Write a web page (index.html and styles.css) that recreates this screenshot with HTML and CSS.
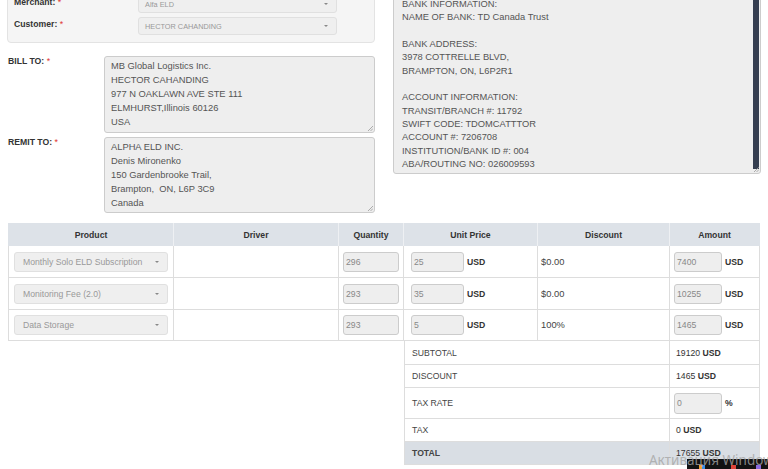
FILE: index.html
```html
<!DOCTYPE html>
<html>
<head>
<meta charset="utf-8">
<link rel="stylesheet" href="styles.css">
</head>
<body>
<div class="top">
  <div class="left">
    <div class="well">
      <div class="frow">
        <div class="lbl">Merchant: <span class="req">*</span></div>
        <div class="sel sel-top">Alfa ELD<span class="caret"></span></div>
      </div>
      <div class="frow">
        <div class="lbl">Customer: <span class="req">*</span></div>
        <div class="sel sel-top">HECTOR CAHANDING<span class="caret"></span></div>
      </div>
    </div>
    <div class="arow arow-first">
      <div class="alb">BILL TO: <span class="req">*</span></div>
      <div class="ta ta-bill">MB Global Logistics Inc.<br>HECTOR CAHANDING<br>977 N OAKLAWN AVE STE 111<br>ELMHURST,Illinois 60126<br>USA<svg class="grip" width="6" height="6" viewBox="0 0 6 6"><path d="M1 6L6 1M3.5 6L6 3.5" stroke="#999" stroke-width="0.8"/></svg></div>
    </div>
    <div class="arow">
      <div class="alb">REMIT TO: <span class="req">*</span></div>
      <div class="ta ta-remit">ALPHA ELD INC.<br>Denis Mironenko<br>150 Gardenbrooke Trail,<br>Brampton,&nbsp; ON, L6P 3C9<br>Canada<svg class="grip" width="6" height="6" viewBox="0 0 6 6"><path d="M1 6L6 1M3.5 6L6 3.5" stroke="#999" stroke-width="0.8"/></svg></div>
    </div>
  </div>
  <div class="right">
    <div class="bank">
      <div class="bank-text">BANK INFORMATION:<br>NAME OF BANK: TD Canada Trust<br><br>BANK ADDRESS:<br>3978 COTTRELLE BLVD,<br>BRAMPTON, ON, L6P2R1<br><br>ACCOUNT INFORMATION:<br>TRANSIT/BRANCH #: 11792<br>SWIFT CODE: TDOMCATTTOR<br>ACCOUNT #: 7206708<br>INSTITUTION/BANK ID #: 004<br>ABA/ROUTING NO: 026009593</div>
      <div class="sb"></div>
      <svg class="grip" width="6" height="6" viewBox="0 0 6 6"><path d="M1 6L6 1M3.5 6L6 3.5" stroke="#999" stroke-width="0.8"/></svg>
    </div>
  </div>
</div>

<table class="items">
  <colgroup>
    <col class="c1"><col class="c2"><col class="c3"><col class="c4"><col class="c5"><col class="c6">
  </colgroup>
  <thead>
    <tr>
      <th class="first">Product</th><th>Driver</th><th>Quantity</th><th>Unit Price</th><th>Discount</th><th class="last">Amount</th>
    </tr>
  </thead>
  <tbody>
    <tr class="r1">
      <td class="first pcell"><div class="sel sel-prod">Monthly Solo ELD Subscription<span class="caret"></span></div></td>
      <td></td>
      <td class="qcell"><span class="inp inp-q">296</span></td>
      <td class="ucell"><span class="inp inp-u">25</span><b class="cur">USD</b></td>
      <td class="dcell">$0.00</td>
      <td class="acell"><span class="inp inp-a">7400</span><b class="cur">USD</b></td>
    </tr>
    <tr class="r2">
      <td class="first pcell"><div class="sel sel-prod">Monitoring Fee (2.0)<span class="caret"></span></div></td>
      <td></td>
      <td class="qcell"><span class="inp inp-q">293</span></td>
      <td class="ucell"><span class="inp inp-u">35</span><b class="cur">USD</b></td>
      <td class="dcell">$0.00</td>
      <td class="acell"><span class="inp inp-a">10255</span><b class="cur">USD</b></td>
    </tr>
    <tr class="r3">
      <td class="first pcell"><div class="sel sel-prod">Data Storage<span class="caret"></span></div></td>
      <td></td>
      <td class="qcell"><span class="inp inp-q">293</span></td>
      <td class="ucell"><span class="inp inp-u">5</span><b class="cur">USD</b></td>
      <td class="dcell">100%</td>
      <td class="acell"><span class="inp inp-a">1465</span><b class="cur">USD</b></td>
    </tr>
    <tr class="s s1">
      <td class="blank" colspan="3"></td>
      <td class="slabel" colspan="2">SUBTOTAL</td>
      <td class="sval">19120 <b>USD</b></td>
    </tr>
    <tr class="s s2">
      <td class="blank" colspan="3"></td>
      <td class="slabel" colspan="2">DISCOUNT</td>
      <td class="sval">1465 <b>USD</b></td>
    </tr>
    <tr class="s s3">
      <td class="blank" colspan="3"></td>
      <td class="slabel" colspan="2">TAX RATE</td>
      <td class="sval"><span class="inp inp-t">0</span><b class="cur">%</b></td>
    </tr>
    <tr class="s s4">
      <td class="blank" colspan="3"></td>
      <td class="slabel" colspan="2">TAX</td>
      <td class="sval">0 <b>USD</b></td>
    </tr>
    <tr class="s s5 total">
      <td class="blank" colspan="3"></td>
      <td class="slabel" colspan="2"><b>TOTAL</b></td>
      <td class="sval">17655 <b>USD</b></td>
    </tr>
  </tbody>
</table>

<div class="taskbar">
  <span class="ic ic1"></span><span class="ic ic2"></span><span class="ic ic3"></span>
</div>
<div class="watermark">Активация Window</div>
</body>
</html>
```

FILE: styles.css
```css
* { box-sizing: border-box; }
html, body { margin: 0; padding: 0; }
body {
  font-family: "Liberation Sans", Arial, sans-serif;
  color: #333;
  font-size: 9.33px;
  background: #fff;
  width: 768px;
  height: 469px;
  overflow: hidden;
  position: relative;
}

/* top section */
.top {
  display: flex;
  align-items: flex-start;
  gap: 18px;
  padding: 0 7px;
  margin-top: -25px;
}
.left, .right { width: 368px; flex: none; }

.well {
  background: #f5f5f5;
  border: 1px solid #e3e3e3;
  border-radius: 4px;
  padding: 19px 6px 7px;
  display: flex;
  flex-direction: column;
  gap: 4px;
}
.frow { display: flex; align-items: flex-start; }
.lbl {
  width: 124px;
  font-weight: bold;
  font-size: 8.67px;
  line-height: 14px;
}
.req { color: #e0332f; font-weight: normal; }

.sel {
  position: relative;
  display: flex;
  align-items: center;
  height: 18px;
  border: 1px solid #e0e0e0;
  background: #efefef;
  border-radius: 3px;
  color: #999;
  padding-left: 6px;
  white-space: nowrap;
}
.sel-top { width: 199px; font-size: 7.33px; }
.caret {
  position: absolute;
  right: 8px;
  top: 50%;
  margin-top: -1px;
  width: 0; height: 0;
  border-left: 2px solid transparent;
  border-right: 2px solid transparent;
  border-top: 2px solid #888;
}

.arow { display: flex; margin-top: 4px; }
.arow-first { margin-top: 13px; }
.alb {
  width: 97px;
  padding-left: 1px;
  font-weight: bold;
  font-size: 8.67px;
  line-height: 10px;
}
.ta {
  position: relative;
  width: 271px;
  background: #eee;
  border: 1px solid #ccc;
  border-radius: 3px;
  padding: 3px 6px;
  font-size: 9.33px;
  line-height: 13.9px;
  color: #555;
}
.ta-bill { height: 77px; }
.ta-remit { height: 76px; }
.grip { position: absolute; right: 1px; bottom: 1px; }

.bank {
  position: relative;
  display: flex;
  height: 199px;
  background: #eee;
  border: 1px solid #ccc;
  border-radius: 3px;
  overflow: hidden;
}
.bank-text {
  flex: 1;
  padding: 22px 0 0 8px;
  font-size: 9.33px;
  line-height: 13.33px;
  color: #555;
  white-space: nowrap;
}
.sb {
  width: 6px;
  flex: none;
  margin: 0 1px 4px 0;
  background: #353e50;
}

/* items table */
.items {
  margin: 10px 8px 0;
  width: 752px;
  table-layout: fixed;
  border-collapse: separate;
  border-spacing: 0;
}
.c1 { width: 166px; }
.c2 { width: 165px; }
.c3 { width: 65px; }
.c4 { width: 134px; }
.c5 { width: 132px; }
.c6 { width: 90px; }

.items th {
  height: 23px;
  background: #dde2e8;
  font-size: 8.67px;
  font-weight: bold;
  text-align: center;
  color: #333;
  padding: 0;
  border-right: 1px solid #eef0f3;
}
.items th.first { border-left: 1px solid #dde2e8; }
.items th.last { border-right: 1px solid #dde2e8; }

.items td {
  padding: 0;
  vertical-align: middle;
  border-right: 1px solid #ddd;
  border-bottom: 1px solid #ddd;
  white-space: nowrap;
}
.items td.first { border-left: 1px solid #ddd; }
.r1 td, .r2 td { height: 32px; }
.r3 td { height: 31px; }

.pcell { padding: 0 5px !important; }
.sel-prod { width: 154px; height: 20px; font-size: 8.67px; padding-left: 8px; }

.inp {
  display: inline-block;
  vertical-align: middle;
  height: 20px;
  border: 1px solid #ccc;
  background: #eee;
  border-radius: 3px;
  color: #888;
  padding: 0 2px;
  font-size: 8.67px;
  line-height: 18px;
}
.inp-q { width: 56px; }
.inp-u { width: 53px; }
.inp-a { width: 48px; }
.inp-t { width: 48px; height: 21px; line-height: 19px; margin-left: -2px; }
.cur { font-size: 8.67px; margin-left: 3px; vertical-align: middle; }

.qcell { padding-left: 4px !important; }
.ucell { padding-left: 7px !important; }
.dcell { padding-left: 3px !important; font-size: 9.33px; color: #444; }
.acell { padding-left: 4px !important; }

.items td.blank { border: none; }
.items td.slabel {
  border-left: 1px solid #ddd;
  padding-left: 7px;
  font-size: 8.67px;
  color: #444;
}
.items td.sval {
  padding-left: 6px;
  font-size: 8.67px;
  color: #333;
}
.s1 td { height: 24px; }
.s2 td { height: 23px; }
.s3 td { height: 31px; }
.s4 td { height: 23px; }
.s5 td { height: 23px; }
.total td.slabel, .total td.sval { background: #d9dee4; }

/* OS overlay */
.taskbar {
  position: absolute;
  left: 687px;
  top: 459px;
  width: 81px;
  height: 10px;
  background: #121212;
}
.ic { position: absolute; top: 6px; width: 6px; height: 4px; }
.ic1 { left: 12px; background: linear-gradient(90deg, #f0a030 50%, #3a8ee6 50%); }
.ic2 { left: 44px; background: #e0443a; width: 5px; }
.ic3 { left: 69px; background: #8c6be0; width: 5px; }
.watermark {
  position: absolute;
  left: 649px;
  top: 451px;
  font-family: "Noto Sans", "Open Sans", sans-serif;
  font-size: 13.5px;
  line-height: 18px;
  color: rgba(165, 165, 165, 0.8);
  white-space: nowrap;
}
```
